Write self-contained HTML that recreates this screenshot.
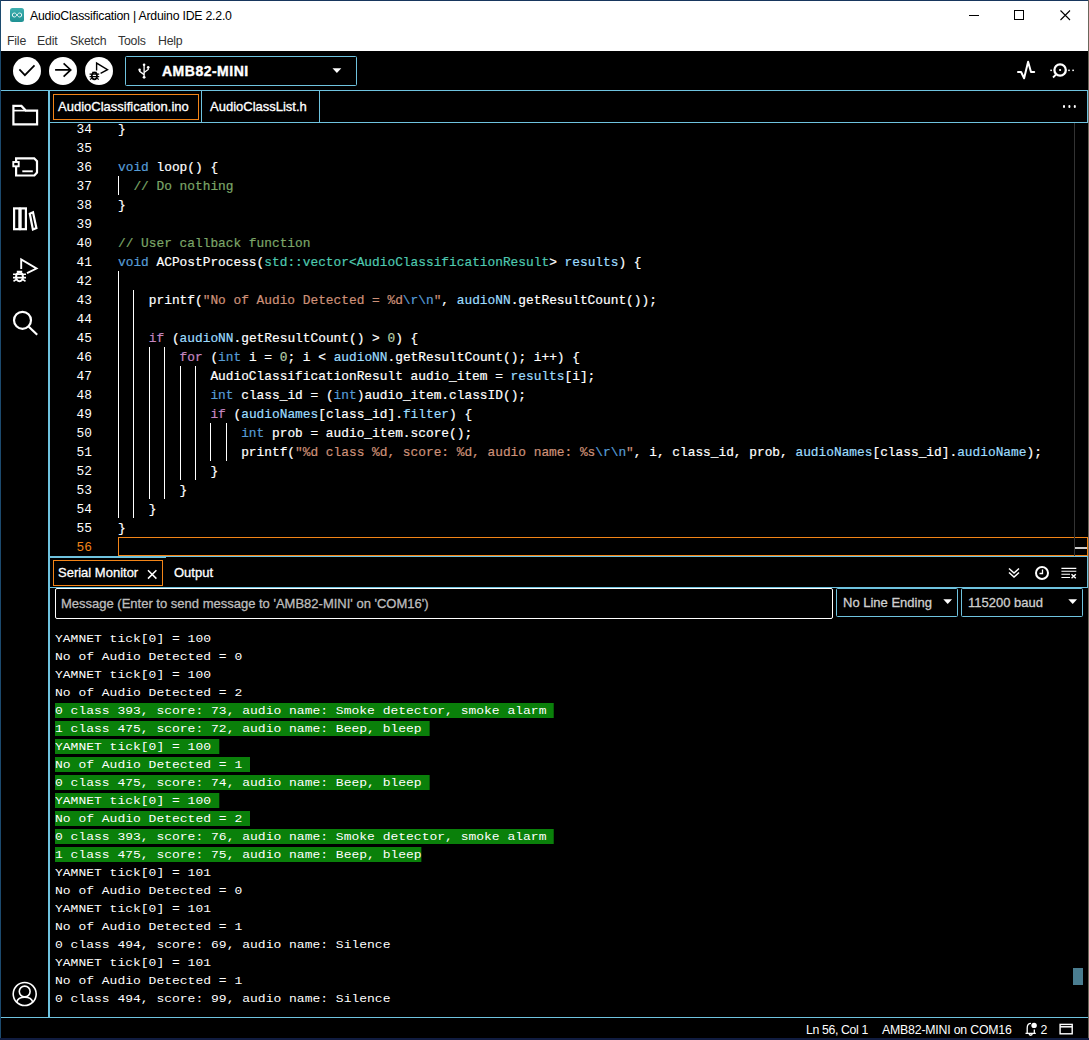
<!DOCTYPE html>
<html>
<head>
<meta charset="utf-8">
<title>AudioClassification | Arduino IDE 2.2.0</title>
<style>
*{box-sizing:border-box;margin:0;padding:0}
html,body{width:1089px;height:1040px;overflow:hidden;background:#000}
body{position:relative;font-family:"Liberation Sans",sans-serif;color:#fff}
.abs{position:absolute}
#win{position:absolute;left:0;top:0;width:1089px;height:1040px;background:#000;overflow:hidden}
#titlebar{left:1px;top:1px;width:1087px;height:50px;background:#fff}
#title{left:30px;top:9px;letter-spacing:-0.22px;font-size:12.3px;color:#000;white-space:nowrap;line-height:15px}
.menu{top:34px;letter-spacing:-0.2px;font-size:12.3px;color:#333;line-height:15px;white-space:nowrap}
.hl{background:#6fc3df}
.circ{width:28px;height:28px;border-radius:50%;background:#fff;top:57px}
#board{left:125px;top:56px;width:232px;height:30px;border:1px solid #6fc3df;border-radius:1.5px}
#boardname{left:162px;top:62px;font-size:14px;letter-spacing:0.5px;-webkit-text-stroke:0.4px;font-weight:bold;line-height:18px;white-space:nowrap}
.tab{font-size:13px;-webkit-text-stroke:0.3px;line-height:16px;white-space:nowrap;color:#fff}
.mono{font-family:"Liberation Mono",monospace}
#code{left:50px;top:119px;width:1038px;height:438px;overflow:hidden}
.ln{position:absolute;left:0;width:42px;padding-top:1px;text-align:right;font-family:"Liberation Mono",monospace;font-size:12.83px;line-height:19px;height:20px;color:#fff}
.cl{position:absolute;left:68px;padding-top:1px;-webkit-text-stroke:0.2px;font-family:"Liberation Mono",monospace;font-size:12.83px;line-height:19px;height:20px;white-space:pre;color:#fff}
.k{color:#569cd6}.c{color:#7ca668}.s{color:#ce9178}.t{color:#4ec9b0}.v{color:#9cdcfe}.f{color:#c586c0}.e{color:#569cd6}.n{color:#b5cea8}
.g{position:absolute;width:1px;background:#fff}
#serial{left:55px;top:630px;font-family:"Liberation Mono",monospace;font-size:11px;transform:scaleX(1.1818);transform-origin:0 0;line-height:18px;color:#fff}
#serial div{height:18px;white-space:pre}
#serial span{display:inline-block;height:18px;line-height:18px;background:linear-gradient(#0a800a,#0a800a) 0 1px/100% 15px no-repeat}
</style>
</head>
<body>
<div id="win">
<!-- title + menu -->
<div id="titlebar" class="abs"></div>
<div class="abs" style="left:0;top:0;width:1089px;height:1px;background:#17365d"></div>
<div class="abs" style="left:0;top:0;width:1px;height:1040px;background:#1c4a6e"></div>
<div class="abs" style="left:1088px;top:0;width:1px;height:1040px;background:#6b675b"></div>
<div class="abs" style="left:0;top:1038px;width:1089px;height:2px;background:#101c40"></div>
<svg class="abs" style="left:10px;top:8px" width="14" height="14" viewBox="0 0 14 14"><defs><linearGradient id="ag" x1="0" y1="0" x2="0" y2="1"><stop offset="0" stop-color="#3fb0b0"/><stop offset="1" stop-color="#1f9193"/></linearGradient></defs><rect x="0" y="0" width="14" height="14" rx="2.500" fill="url(#ag)"/><path d="M7 7c-.9-1.400-1.700-2-2.700-2a2 2 0 0 0 0 4c1 0 1.800-.6 2.700-2c.9 1.400 1.700 2 2.700 2a2 2 0 0 0 0-4c-1 0-1.800.6-2.700 2z" fill="none" stroke="#e8f6f6" stroke-width="1"/></svg>
<div id="title" class="abs">AudioClassification | Arduino IDE 2.2.0</div>
<div class="abs menu" style="left:7px">File</div>
<div class="abs menu" style="left:37px">Edit</div>
<div class="abs menu" style="left:70px">Sketch</div>
<div class="abs menu" style="left:118px">Tools</div>
<div class="abs menu" style="left:158px">Help</div>
<svg class="abs" style="left:960px;top:5px" width="120" height="22" viewBox="0 0 120 22"><g stroke="#000" stroke-width="1" fill="none" shape-rendering="crispEdges"><path d="M9 10.500h10"/><rect x="54.500" y="5.500" width="9" height="9"/></g><path d="M100.500 5.500l9.500 9.500M110 5.500l-9.500 9.500" stroke="#000" stroke-width="1.100" fill="none"/></svg>

<!-- toolbar -->
<div class="abs circ" style="left:13px"></div>
<div class="abs circ" style="left:49px"></div>
<div class="abs circ" style="left:85px"></div>
<div id="board" class="abs"></div>
<div id="boardname" class="abs">AMB82-MINI</div>

<!-- frame lines -->
<div class="abs hl" style="left:1px;top:90px;width:1087px;height:1px"></div>
<div class="abs hl" style="left:48px;top:90px;width:2px;height:928px"></div>
<div class="abs hl" style="left:50px;top:122px;width:1038px;height:1px"></div>
<div class="abs hl" style="left:1087px;top:91px;width:1px;height:32px"></div>
<div class="abs hl" style="left:1087px;top:556px;width:1px;height:32px"></div>
<div class="abs hl" style="left:1px;top:1017px;width:1087px;height:1px"></div>

<!-- editor -->
<div id="code" class="abs">
<div class="ln" style="top:0px">34</div><div class="cl" style="top:0px">}</div>
<div class="ln" style="top:19px">35</div><div class="cl" style="top:19px"></div>
<div class="ln" style="top:38px">36</div><div class="cl" style="top:38px"><span class="k">void</span> loop() {</div>
<div class="ln" style="top:57px">37</div><div class="cl" style="top:57px">  <span class="c">// Do nothing</span></div>
<div class="ln" style="top:76px">38</div><div class="cl" style="top:76px">}</div>
<div class="ln" style="top:95px">39</div><div class="cl" style="top:95px"></div>
<div class="ln" style="top:114px">40</div><div class="cl" style="top:114px"><span class="c">// User callback function</span></div>
<div class="ln" style="top:133px">41</div><div class="cl" style="top:133px"><span class="k">void</span> ACPostProcess(<span class="t">std::vector&lt;AudioClassificationResult</span>&gt; <span class="v">results</span>) {</div>
<div class="ln" style="top:152px">42</div><div class="cl" style="top:152px"></div>
<div class="ln" style="top:171px">43</div><div class="cl" style="top:171px">    printf(<span class="s">"No of Audio Detected = %d<span class="e">\r\n</span>"</span>, <span class="v">audioNN</span>.getResultCount());</div>
<div class="ln" style="top:190px">44</div><div class="cl" style="top:190px"></div>
<div class="ln" style="top:209px">45</div><div class="cl" style="top:209px">    <span class="f">if</span> (<span class="v">audioNN</span>.getResultCount() &gt; <span class="n">0</span>) {</div>
<div class="ln" style="top:228px">46</div><div class="cl" style="top:228px">        <span class="f">for</span> (<span class="k">int</span> i = <span class="n">0</span>; i &lt; <span class="v">audioNN</span>.getResultCount(); i++) {</div>
<div class="ln" style="top:247px">47</div><div class="cl" style="top:247px">            AudioClassificationResult audio_item = <span class="v">results</span>[i];</div>
<div class="ln" style="top:266px">48</div><div class="cl" style="top:266px">            <span class="k">int</span> class_id = (<span class="k">int</span>)audio_item.classID();</div>
<div class="ln" style="top:285px">49</div><div class="cl" style="top:285px">            <span class="f">if</span> (<span class="v">audioNames</span>[class_id].<span class="v">filter</span>) {</div>
<div class="ln" style="top:304px">50</div><div class="cl" style="top:304px">                <span class="k">int</span> prob = audio_item.score();</div>
<div class="ln" style="top:323px">51</div><div class="cl" style="top:323px">                printf(<span class="s">"%d class %d, score: %d, audio name: %s<span class="e">\r\n</span>"</span>, i, class_id, prob, <span class="v">audioNames</span>[class_id].<span class="v">audioName</span>);</div>
<div class="ln" style="top:342px">52</div><div class="cl" style="top:342px">            }</div>
<div class="ln" style="top:361px">53</div><div class="cl" style="top:361px">        }</div>
<div class="ln" style="top:380px">54</div><div class="cl" style="top:380px">    }</div>
<div class="ln" style="top:399px">55</div><div class="cl" style="top:399px">}</div>
<div class="ln" style="top:418px;color:#f38518">56</div><div class="cl" style="top:418px"></div>
<div class="g" style="left:68.0px;top:57px;height:19px"></div>
<div class="g" style="left:68.0px;top:152px;height:247px"></div>
<div class="g" style="left:83.4px;top:171px;height:228px"></div>
<div class="g" style="left:98.8px;top:228px;height:152px"></div>
<div class="g" style="left:114.2px;top:228px;height:152px"></div>
<div class="g" style="left:129.6px;top:247px;height:114px"></div>
<div class="g" style="left:145.0px;top:247px;height:114px"></div>
<div class="g" style="left:160.4px;top:304px;height:38px"></div>
<div class="g" style="left:175.8px;top:304px;height:38px"></div>
<div class="abs" style="left:68px;top:418px;width:970px;height:19px;border:1px solid #f38518"></div>
<div class="abs" style="left:1024px;top:4px;width:1px;height:434px;background:#333"></div>
<div class="abs" style="left:1025px;top:428px;width:12px;height:2px;background:#ccc"></div>
</div>
<!-- serial -->
<div id="serial" class="abs">
<div>YAMNET tick[0] = 100</div>
<div>No of Audio Detected = 0</div>
<div>YAMNET tick[0] = 100</div>
<div>No of Audio Detected = 2</div>
<div><span>0 class 393, score: 73, audio name: Smoke detector, smoke alarm </span></div>
<div><span>1 class 475, score: 72, audio name: Beep, bleep </span></div>
<div><span>YAMNET tick[0] = 100 </span></div>
<div><span>No of Audio Detected = 1 </span></div>
<div><span>0 class 475, score: 74, audio name: Beep, bleep </span></div>
<div><span>YAMNET tick[0] = 100 </span></div>
<div><span>No of Audio Detected = 2 </span></div>
<div><span>0 class 393, score: 76, audio name: Smoke detector, smoke alarm </span></div>
<div><span>1 class 475, score: 75, audio name: Beep, bleep</span></div>
<div>YAMNET tick[0] = 101</div>
<div>No of Audio Detected = 0</div>
<div>YAMNET tick[0] = 101</div>
<div>No of Audio Detected = 1</div>
<div>0 class 494, score: 69, audio name: Silence</div>
<div>YAMNET tick[0] = 101</div>
<div>No of Audio Detected = 1</div>
<div>0 class 494, score: 99, audio name: Silence</div>
</div>
<!-- editor tabs -->
<div class="abs" style="left:53px;top:94px;width:146px;height:26px;border:1px solid #f38518"></div>
<div class="abs tab" style="left:58px;top:99px">AudioClassification.ino</div>
<div class="abs hl" style="left:201px;top:91px;width:1px;height:31px"></div>
<div class="abs tab" style="left:210px;top:99px">AudioClassList.h</div>
<div class="abs hl" style="left:319px;top:91px;width:1px;height:31px"></div>
<div class="abs" style="left:1062.500px;top:105.300px;width:2.400px;height:2.400px;border-radius:50%;background:#fff;box-shadow:5.400px 0 0 #fff,10.800px 0 0 #fff"></div>
<!-- panel -->
<div class="abs hl" style="left:50px;top:556px;width:1038px;height:1px"></div>
<div class="abs hl" style="left:50px;top:556px;width:116px;height:2px"></div>
<div class="abs" style="left:53px;top:560px;width:110px;height:26px;border:1px solid #f38518"></div>
<div class="abs tab" style="left:58px;top:565px">Serial Monitor</div>
<div class="abs tab" style="left:174px;top:565px">Output</div>
<div class="abs hl" style="left:50px;top:587px;width:1038px;height:1px"></div>
<div class="abs" style="left:55px;top:588px;width:778px;height:31px;border:1px solid #fff;border-radius:2px"></div>
<div class="abs tab" style="left:61px;top:596px;color:#bdbdbd">Message (Enter to send message to 'AMB82-MINI' on 'COM16')</div>
<div class="abs" style="left:836px;top:588px;width:122px;height:29px;border:1px solid #6fc3df;border-radius:1.5px"></div>
<div class="abs tab" style="left:843px;top:595px;color:#cfcfcf">No Line Ending</div>
<div class="abs" style="left:961px;top:588px;width:122px;height:29px;border:1px solid #6fc3df;border-radius:1.5px"></div>
<div class="abs tab" style="left:968px;top:595px;color:#cfcfcf">115200 baud</div>
<!-- status bar -->
<div class="abs" style="left:806px;top:1023px;font-size:12.3px;letter-spacing:-0.36px;line-height:15px;white-space:nowrap">Ln 56, Col 1</div>
<div class="abs" style="left:882px;top:1023px;font-size:12.3px;letter-spacing:-0.19px;line-height:15px;white-space:nowrap">AMB82-MINI on COM16</div>
<div class="abs" style="left:1040.500px;top:1023px;font-size:12.3px;line-height:15px;white-space:nowrap">2</div>
<!-- scrollbars -->
<div class="abs" style="left:1073px;top:968px;width:10px;height:17px;background:#4a7d90"></div>
<!-- toolbar icons -->
<svg class="abs" style="left:13px;top:57px" width="28" height="28" viewBox="0 0 28 28"><path d="M6.400 12.400L11.900 18.200L21.500 8.400" fill="none" stroke="#000" stroke-width="1.700"/></svg>
<svg class="abs" style="left:49px;top:57px" width="28" height="28" viewBox="0 0 28 28"><path d="M6.100 12.900H21.500M14.600 6.400L21.700 12.900L14.600 19.600" fill="none" stroke="#000" stroke-width="1.700"/></svg>
<svg class="abs" style="left:85px;top:57px" width="28" height="28" viewBox="0 0 28 28"><path d="M11.600 13.400V6.100L22.500 12.600L15.600 16.300" fill="none" stroke="#000" stroke-width="1.400"/><ellipse cx="9.400" cy="19" rx="2.600" ry="3.300" fill="none" stroke="#000" stroke-width="1.700"/><path d="M4.600 17.200h9.600M4.600 19.600h9.600M5 22.400l2.300-1.300M13.800 22.400l-2.300-1.300M7.200 15.400h4.400" stroke="#000" stroke-width="1.200" fill="none"/></svg>
<svg class="abs" style="left:137px;top:62px" width="15" height="18" viewBox="0 0 15 18"><g fill="none" stroke="#fff" stroke-width="1.300"><path d="M7.100 3V15"/><path d="M2.600 8V9.400L7.100 12.600"/><path d="M11.200 5.500V7.400L7.100 10.400"/></g><circle cx="7.100" cy="2.800" r="1.300" fill="#fff"/><circle cx="7.100" cy="15.300" r="1.400" fill="#fff"/><circle cx="2.600" cy="7.800" r="1.300" fill="#fff"/><circle cx="11.200" cy="5.300" r="1.300" fill="#fff"/></svg>
<svg class="abs" style="left:332px;top:68px" width="10" height="6" viewBox="0 0 10 6"><path d="M0.500 0.300H9.300L4.900 5z" fill="#fff"/></svg>
<svg class="abs" style="left:1012px;top:56px" width="70" height="30" viewBox="0 0 70 30"><path d="M6 16H9.100L12.100 22.300L16.100 5.800L19 16H22.200" fill="none" stroke="#fff" stroke-width="2" stroke-linejoin="round" stroke-linecap="round"/><circle cx="48.100" cy="14" r="5.700" fill="none" stroke="#fff" stroke-width="2.300"/><circle cx="48.100" cy="14" r="1.100" fill="#fff"/><path d="M44 18.500L41 21.500" stroke="#fff" stroke-width="1.800"/><rect x="38.300" y="13.600" width="1.600" height="1.500" fill="#fff"/><rect x="56.200" y="13.600" width="1.600" height="1.500" fill="#fff"/><rect x="60.300" y="13.600" width="1.600" height="1.500" fill="#fff"/></svg>
<!-- sidebar icons -->
<svg class="abs" style="left:0;top:95px" width="48" height="250" viewBox="0 0 48 250"><g fill="none" stroke="#fff" stroke-width="2.200" stroke-linejoin="miter">
<path d="M13.400 29.400V10.900H21.400L25.800 15.600H37.100V29.400z"/><path d="M13.400 15.600H25.800" stroke-width="1.700"/>
<path d="M16.100 63.300H34.200L37 66.300V77.600L34.400 80.500H16.100z"/><rect x="13.300" y="67" width="5.400" height="4.300" fill="#000" stroke-width="1.900"/><path d="M22.300 76.300H32.800" stroke-width="1.900"/>
<rect x="14.100" y="113.400" width="5.300" height="20.800"/><rect x="20.600" y="113.400" width="5.300" height="20.800"/><path d="M29.800 118.800L33 117.300L36.400 133L32.900 134.400z"/>
<path d="M21.200 174V164.500L36.500 173.500L27 178.200" stroke-width="1.900"/><ellipse cx="19.500" cy="181.800" rx="3.400" ry="4.400" stroke-width="2.100"/><path d="M13 179.300h13M13 182.600h13M13.500 186.200l3-1.800M25.500 186.200l-3-1.800M16.800 176.500h5.400" stroke-width="1.600"/>
<circle cx="22.500" cy="225.300" r="8.500"/><path d="M28.800 231.800L37.200 239.700"/>
</g></svg>
<svg class="abs" style="left:10px;top:980px" width="30" height="30" viewBox="0 0 30 30"><g fill="none" stroke="#fff" stroke-width="1.600"><circle cx="14.700" cy="14" r="11.500"/><circle cx="14.700" cy="11.500" r="5.400"/><path d="M6.600 22.200Q8 17.300 14.700 17.300Q21.400 17.300 22.800 22.200"/></g></svg>
<!-- panel icons -->
<svg class="abs" style="left:144px;top:567px" width="14" height="14" viewBox="0 0 14 14"><path d="M4 3.200L12.400 11.600M12.400 3.200L4 11.600" stroke="#fff" stroke-width="1.500" fill="none"/></svg>
<svg class="abs" style="left:1004px;top:562px" width="80" height="22" viewBox="0 0 80 22"><g fill="none" stroke="#fff"><path d="M5 6.500L10 11L15 6.500M5 10.500L10 15L15 10.500" stroke-width="1.500"/><circle cx="38" cy="11" r="6" stroke-width="2"/><path d="M38.500 7.500V11.500H35.500" stroke-width="1.300"/><path d="M57.400 6.400H72.300M57.400 9.300H72.300M57.400 12.300H66M57.400 15.500H66" stroke-width="1.100"/><path d="M67.500 12.300L71.800 16.300M71.800 12.300L67.500 16.300" stroke-width="1.400"/></g></svg>
<svg class="abs" style="left:943px;top:599px" width="10" height="6" viewBox="0 0 10 6"><path d="M0.300 0.300H9.100L4.700 5z" fill="#fff"/></svg>
<svg class="abs" style="left:1068px;top:599px" width="10" height="6" viewBox="0 0 10 6"><path d="M0.300 0.300H9.100L4.700 5z" fill="#fff"/></svg>
<!-- status icons -->
<svg class="abs" style="left:1020px;top:1019px" width="68" height="20" viewBox="0 0 68 20"><g fill="none" stroke="#fff" stroke-width="1.300"><path d="M5.500 14.300H15.800M7.200 14.300V9Q7.200 4.300 11 4.300M14.300 10.500V14.300"/><path d="M9 15.300Q10.700 17 12.400 15.300" stroke-width="1.500"/><rect x="40.100" y="5.400" width="12.100" height="9.400" stroke-width="1.400"/><path d="M40.100 7.800H52.200" stroke-width="1.500"/></g><circle cx="14.100" cy="6.400" r="2.700" fill="#fff"/></svg>


</div>
</body>
</html>
